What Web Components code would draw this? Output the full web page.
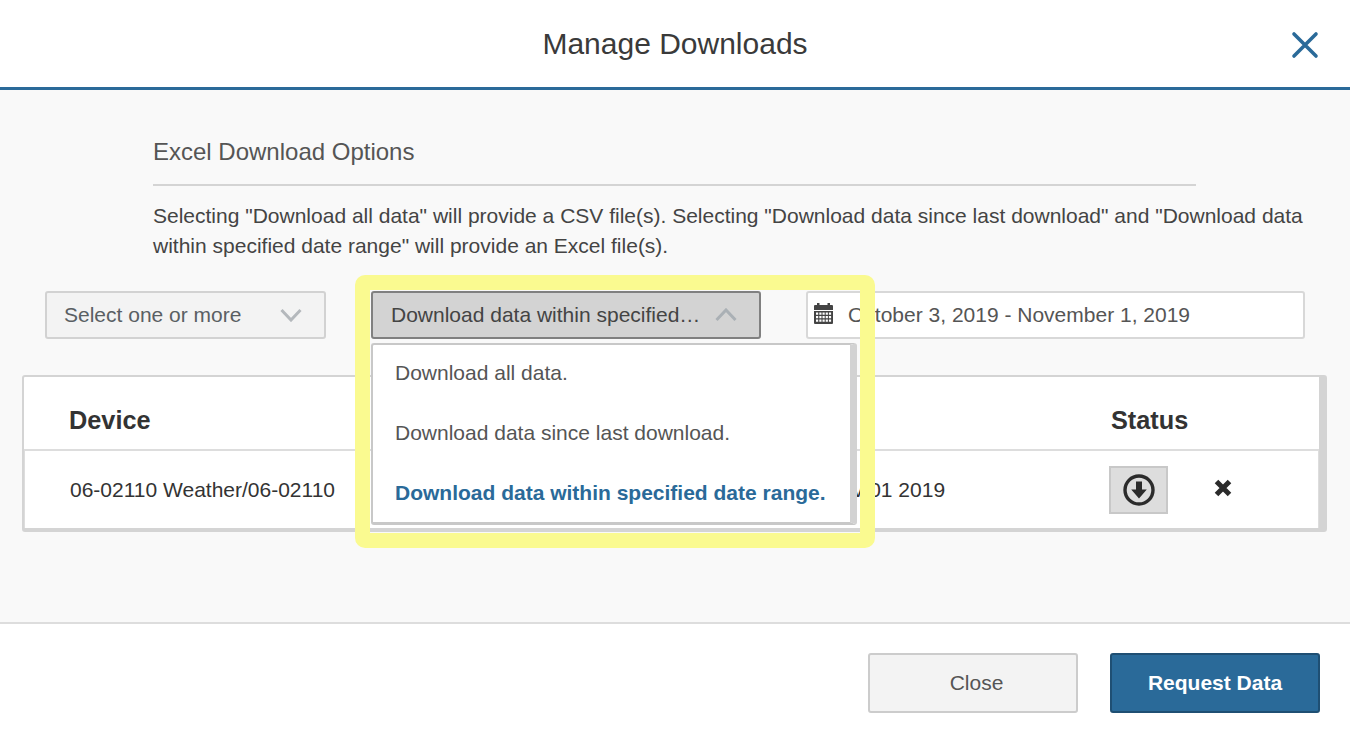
<!DOCTYPE html>
<html lang="en"><head><meta charset="utf-8"><title>Manage Downloads</title>
<style>
html,body{margin:0;padding:0;background:#fff}
body{font-family:"Liberation Sans",Arial,sans-serif;font-size:21px;color:#555}
</style></head><body>
<dl-modal>
  <span slot="title">Manage Downloads</span>
  <dl-options>
    <span slot="heading">Excel Download Options</span>
    <span slot="text">Selecting "Download all data" will provide a CSV file(s). Selecting "Download data since last download" and "Download data within specified date range" will provide an Excel file(s).</span>
    <dl-select slot="device" style="--w:281px">Select one or more</dl-select>
    <dl-select slot="range" open style="--w:390px">Download data within specified…
      <dl-menu slot="menu">
        <dl-item>Download all data.</dl-item>
        <dl-item>Download data since last download.</dl-item>
        <dl-item selected>Download data within specified date range.</dl-item>
      </dl-menu>
    </dl-select>
    <dl-date slot="date">October 3, 2019 - November 1, 2019</dl-date>
    <dl-highlight slot="overlay"></dl-highlight>
    <dl-table slot="table">
      <span slot="device-head">Device</span>
      <span slot="status-head">Status</span>
      <span slot="device">06-02110 Weather/06-02110</span>
      <span slot="date">Nov 01 2019</span>
    </dl-table>
  </dl-options>
  <dl-button slot="footer">Close</dl-button>
  <dl-button slot="footer" primary>Request Data</dl-button>
</dl-modal>
<script>
function def(name,html){
  customElements.define(name,class extends HTMLElement{
    constructor(){super();this.attachShadow({mode:'open'}).innerHTML=html;}
  });
}
def('dl-modal',`<style>
:host{display:flex;flex-direction:column;height:743px;width:1350px;overflow:hidden}
header{height:87px;border-bottom:3px solid #2a6a99;display:flex;align-items:center;justify-content:center;position:relative;background:#fff;font-size:30px;color:#3a3a3a;flex:none}
header svg{position:absolute;left:1291px;top:31px}
main{flex:1;background:#f9f9f9;border-bottom:2px solid #ddd}
footer{height:119px;flex:none;background:#fff;display:flex;justify-content:flex-end;align-items:flex-start;gap:32px;padding:29px 30px 0;box-sizing:border-box}
</style>
<header><slot name="title"></slot>
<svg width="28" height="28" viewBox="0 0 28 28" aria-hidden="true"><path d="M3 3L25 25M25 3L3 25" stroke="#2a6a99" stroke-width="3.6" stroke-linecap="round" fill="none"/></svg></header>
<main><slot></slot></main>
<footer><slot name="footer"></slot></footer>`);

def('dl-options',`<style>
:host{display:block}
.head{margin:46px 0 0 153px;width:1043px;height:48px;line-height:32px;border-bottom:2px solid #d4d4d4;font-size:24px;color:#555}
.text{margin:15px 45px 0 153px;line-height:30px;font-size:21px;color:#444}
.row{margin-top:30px;display:flex;gap:45px;padding-left:45px;position:relative;z-index:2}
.tbl{margin:36px 0 0 22px;display:block}
</style>
<div class="head"><slot name="heading"></slot></div>
<div class="text"><slot name="text"></slot></div>
<div class="row"><slot name="device"></slot><slot name="range"></slot><slot name="date"></slot><slot name="overlay"></slot></div>
<div class="tbl"><slot name="table"></slot></div>`);

def('dl-select',`<style>
:host{display:block;position:relative;width:var(--w);height:48px;box-sizing:border-box;border:2px solid #d2d2d2;border-radius:3px;background:#f3f3f3;color:#5a5f63;font-size:21px}
:host([open]){background:#d3d3d3;border-color:#808080;color:#444}
.in{display:flex;align-items:center;justify-content:space-between;height:100%;padding:0 22px 0 17px;white-space:nowrap}
.up{display:none}
:host([open]) .up{display:block}
:host([open]) .down{display:none}
:host([open]) .in{padding-left:18px}
::slotted(dl-menu){position:absolute;left:-2px;top:50px;z-index:1}
</style>
<div class="in"><span><slot></slot></span>
<svg class="down" width="22" height="14" viewBox="0 0 22 14" aria-hidden="true"><path d="M1.500 2L11 12L20.500 2" stroke="#b4b8bc" stroke-width="3" fill="none"/></svg>
<svg class="up" width="22" height="14" viewBox="0 0 22 14" aria-hidden="true"><path d="M1.500 12L11 2L20.500 12" stroke="#aab0b5" stroke-width="3" fill="none"/></svg>
</div><slot name="menu"></slot>`);

def('dl-menu',`<style>
:host{display:block;width:486px;height:182px;box-sizing:border-box;background:#fff;border:2px solid #c8c8c8;border-right:7px solid #d2d2d2;border-bottom:3px solid #c8c8c8;border-radius:3px}
.list{margin-top:-2px}
</style><div class="list"><slot></slot></div>`);

def('dl-item',`<style>
:host{display:flex;align-items:center;height:60px;padding-left:22px;white-space:nowrap;color:#555;font-size:21px}
:host([selected]){font-weight:bold;color:#2a6a99}
</style><slot></slot>`);

def('dl-date',`<style>
:host{display:flex;align-items:center;width:499px;height:48px;box-sizing:border-box;border:2px solid #d8d8d8;border-radius:3px;background:#fff;color:#555;font-size:21px;padding-left:7px;gap:15px;white-space:nowrap}
svg{margin:-3px 0 0 -1px;flex:none}
</style>
<svg width="19" height="21" viewBox="0 0 19 21" aria-hidden="true"><path fill="#444" d="M3 0h2.500v2H13.500V0H16v2h2a1 1 0 0 1 1 1v4H0V3a1 1 0 0 1 1-1h2z"/><path fill="#444" fill-rule="evenodd" d="M0 8h19v12a1 1 0 0 1-1 1H1a1 1 0 0 1-1-1zM2 9.500v2.200h2.200V9.500zM5.300 9.500v2.200h2.200V9.500zM8.500 9.500v2.200h2.200V9.500zM11.700 9.500v2.200h2.200V9.500zM14.900 9.500v2.200h2.200V9.500zM2 13v2.200h2.200V13zM5.300 13v2.200h2.200V13zM8.500 13v2.200h2.200V13zM11.700 13v2.200h2.200V13zM14.900 13v2.200h2.200V13zM2 16.500v2.200h2.200v-2.200zM5.300 16.500v2.200h2.200v-2.200zM8.500 16.500v2.200h2.200v-2.200zM11.700 16.500v2.200h2.200v-2.200zM14.900 16.500v2.200h2.200v-2.200z"/></svg>
<span><slot></slot></span>`);

def('dl-highlight',`<style>
:host{display:block;position:absolute;left:355px;top:-16px;width:520px;height:273px;box-sizing:border-box;border:15px solid #fafa90;border-radius:10px;z-index:3;pointer-events:none}
</style>`);

def('dl-table',`<style>
:host{display:block;width:1305px;height:157px;box-sizing:border-box;background:#fff;border:solid #d4d4d4;border-width:2px 8px 4px 2px;border-radius:3px}
.r{display:grid;grid-template-columns:806px 280px 1fr;align-items:center}
.h{height:72px;border-bottom:2px solid #ddd;font-weight:bold;font-size:25.300px;color:#333}
.h>div{position:relative;top:7px}
.a{padding-left:45px}
.b .a{padding-left:46px}
.b{height:77px;font-size:21px;color:#333;box-shadow:inset 1px 0 #ddd,inset -1px 0 #ddd}
.date{margin-left:-4px}
.st{display:flex;align-items:center}
.btn{width:59px;height:48px;margin-left:-1px;box-sizing:border-box;background:#ddd;border:2px solid #c8c8c8;display:flex;align-items:center;justify-content:center}
.x{margin:-4px 0 0 45px;display:block}
.s{margin-left:1px}
</style>
<div class="r h"><div class="a"><slot name="device-head"></slot></div><div></div><div><span class="s"><slot name="status-head"></slot></span></div></div>
<div class="r b"><div class="a"><slot name="device"></slot></div><div class="date"><slot name="date"></slot></div>
<div class="st"><div class="btn"><svg width="34" height="34" viewBox="0 0 34 34" aria-hidden="true"><circle cx="17" cy="17" r="14" fill="none" stroke="#2b2b2b" stroke-width="3.400"/><path fill="#2b2b2b" d="M14 8.500h6v8h4.800L17 25.500 9.200 16.500H14z"/></svg></div>
<svg class="x" width="20" height="20" viewBox="0 0 20 20" aria-hidden="true"><path d="M3.500 3.500L16.500 16.500M16.500 3.500L3.500 16.500" stroke="#2b2b2b" stroke-width="5" fill="none"/></svg></div></div>`);

def('dl-button',`<style>
:host{display:flex;align-items:center;justify-content:center;width:210px;height:60px;box-sizing:border-box;border:2px solid #ccc;border-radius:3px;background:#f3f3f3;color:#555;font-size:21px;padding-left:7px}
:host([primary]){background:#2a6a99;border-color:#1f4f73;color:#fff;font-weight:bold;padding-left:0}
</style><slot></slot>`);
</script>
</body></html>
